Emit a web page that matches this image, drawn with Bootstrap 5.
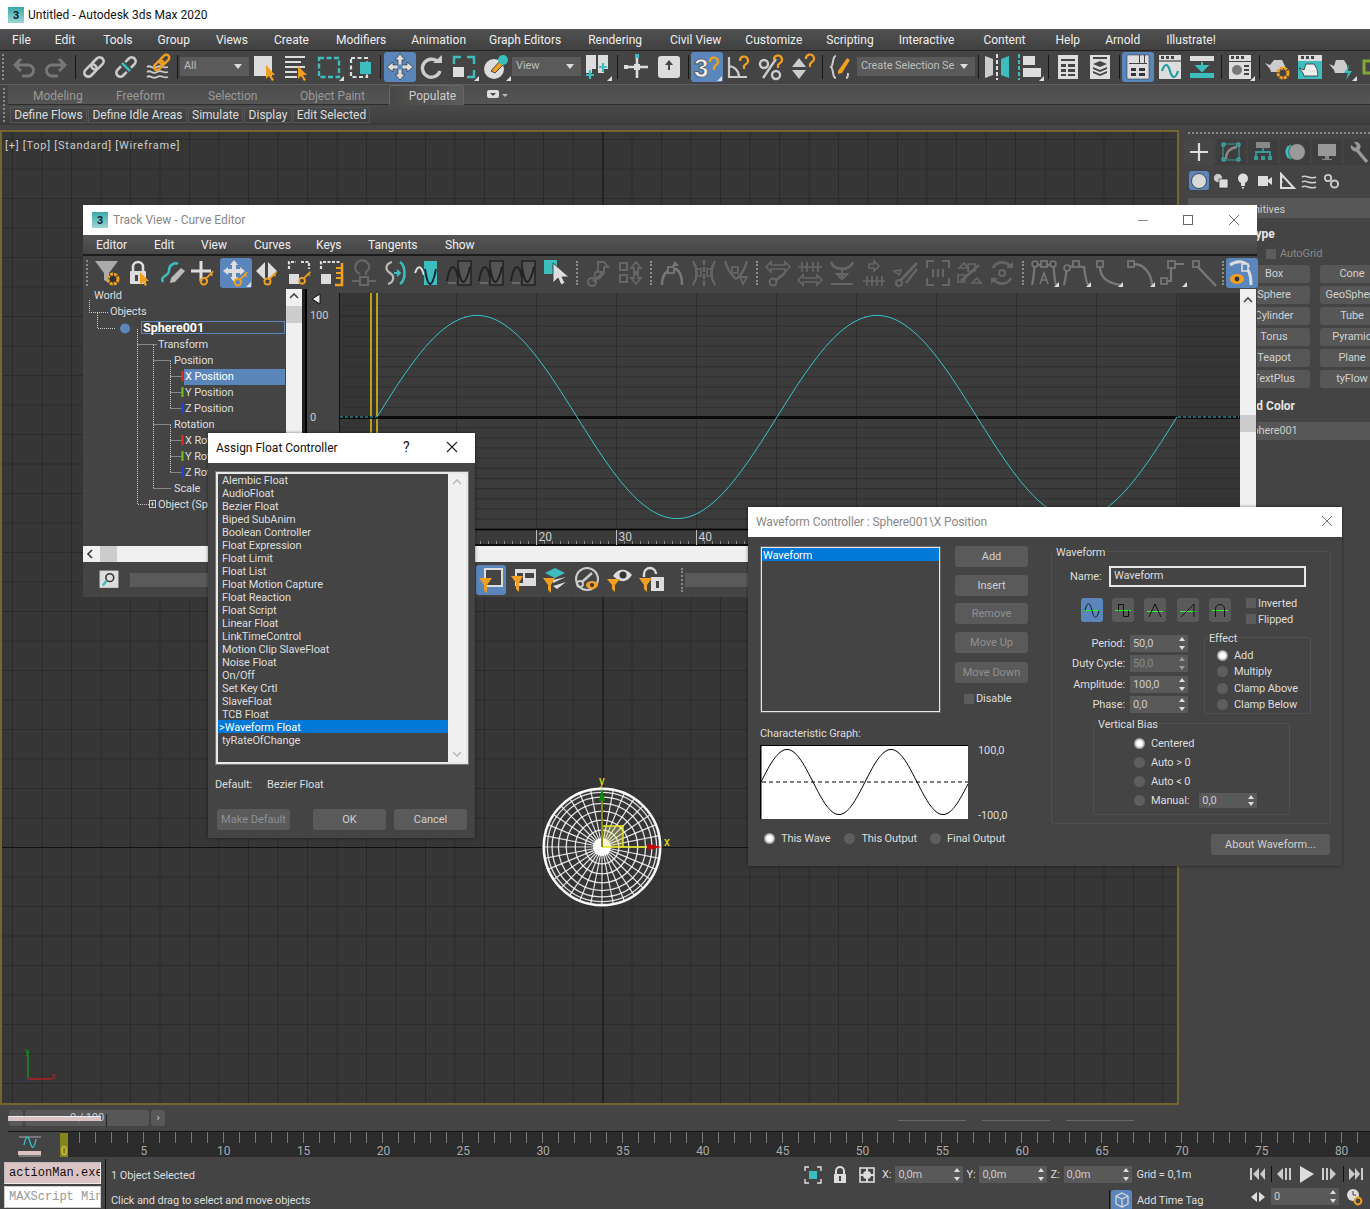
<!DOCTYPE html>
<html lang="en">
<head>
<meta charset="UTF-8">
<title>Untitled - Autodesk 3ds Max 2020</title>
<link href="https://cdn.jsdelivr.net/npm/bootstrap@5.3.0/dist/css/bootstrap.min.css" rel="stylesheet">
<style>
html, body { margin: 0; width: 1370px; height: 1209px; overflow: hidden; }
body { background: #444; color: #ddd; font: 11px/16px Roboto, "Liberation Sans", sans-serif; letter-spacing: -.1px; position: relative; }
svg { display: block; }
.win-title { height: 29px; background: #fff; color: #111; padding-left: 8px; font-size: 12px; letter-spacing: 0; }
.app-icon { width: 16px; height: 16px; margin-right: 4px; background: linear-gradient(#3aa9a9, #9fd4d4); color: #123; font: 700 11px/16px "Liberation Sans", sans-serif; text-align: center; flex: none; }
.menu-strip { height: 22px; background: linear-gradient(#505050, #404040); border-top: 1px solid #555; border-bottom: 1px solid #222; font-size: 12px; letter-spacing: 0; }
.menu-strip span { position: relative; white-space: nowrap; color: #eee; }
.main-tools { height: 34px; padding: 0 0 2px 2px; background: #444; border-bottom: 1px solid #5e5e5e; overflow: hidden; }
.tbtn { width: 32px; height: 30px; flex: none; display: flex; align-items: center; justify-content: center; position: relative; border-radius: 3px; }
.tbtn svg { width: 28px; height: 28px; }
.tbtn.on { background: #5b86bb; }
.tbtn.fly::after { content: ""; position: absolute; right: 1px; bottom: 1px; border-left: 5px solid transparent; border-bottom: 5px solid #ddd; }
.tsep { width: 6px; height: 24px; flex: none; display: flex; justify-content: center; }
.tsep::before { content: ""; width: 1px; background: #161616; }
.tsep.wide { width: 7px; }
.tsep.wider { width: 8px; }
.tsep.dot { width: 10px; }
.tsep.dot::before { width: 0; background: none; border-left: 2px dotted #8c8c8c; }
.grip { width: 2px; height: 26px; flex: none; border-left: 2px dotted #888; }
.tcombo { height: 19px; background: #5a5a5a; color: #bdbdbd; padding-left: 4px; flex: none; position: relative; line-height: 18px; white-space: nowrap; overflow: hidden; }
.tcombo::after { content: ""; position: absolute; right: 7px; top: 7px; border: 4px solid transparent; border-top: 5px solid #ddd; border-bottom: 0; }
.rib-wrap { position: relative; font-size: 12px; letter-spacing: 0; }
.rib-grip { position: absolute; left: 3px; top: 3px; height: 34px; border-left: 2px dotted #888; }
.rib-tabs { height: 20px; margin-left: 8px; background: linear-gradient(#4c4c4c, #555); border-bottom: 1px solid #2d2d2d; color: #999; }
.rib-tabs span { position: absolute; top: 3px; }
.rib-active { position: absolute; left: 381px; top: 0; width: 75px; height: 20px; padding-left: 12px; background: linear-gradient(to right, #484848, #5c5c5c); border: 1px solid #666; border-bottom: 0; border-radius: 3px 3px 0 0; color: #ccc; text-align: center; line-height: 20px; }
.rib-sub { height: 20px; padding: 2px 0 0 10px; background: linear-gradient(#4a4a4a, #3d3d3d); border-bottom: 1px solid #3a3a3a; }
.rib-sub span { border: 1px solid #555; height: 16px; line-height: 14px; text-align: center; color: #ddd; margin-right: 1px; white-space: nowrap; }
.work-row { margin-top: 5px; height: 975px; }
.viewport { width: 1179px; height: 975px; flex: none; position: relative; border: 2px solid #75652f; background-color: #363636;
  background-image: linear-gradient(to right, #2a2a2a 1px, transparent 1px), linear-gradient(to bottom, #2a2a2a 1px, transparent 1px);
  background-size: 29.5px 29.5px; background-position: 10px 7px; }
.vp-label { position: absolute; left: 3px; top: 6px; color: #ccc; font-size: 11px; letter-spacing: .75px; }
.axis-h { position: absolute; left: 0; top: 715px; width: 100%; height: 1px; background: #111; }
.axis-v { position: absolute; left: 600px; top: 0; width: 2px; height: 100%; background: #222; }
.cmd-panel { width: 186px; margin-left: 5px; height: 975px; position: relative; overflow: hidden; }
.cmd-dots { margin-top: 2px; border-top: 2px dotted #888; margin-left: 4px; }
.cmd-tabs { height: 26px; margin-top: 5px; gap: 2px; border-bottom: 1px solid #3a3a3a; }
.cmd-tabs div { width: 30px; height: 26px; display: flex; justify-content: center; align-items: center; flex: none; background: #3e3e3e; border-radius: 4px 4px 0 0; }
.cmd-tabs div.on { background: #474747; }
.cmd-tabs svg { width: 24px; height: 24px; }
.cmd-types { height: 19px; margin-top: 6px; padding-left: 4px; }
.cmd-types div { width: 22px; height: 19px; flex: none; display: flex; justify-content: center; align-items: center; border-radius: 3px; }
.cmd-types svg { width: 18px; height: 18px; }
.cmd-types .on { width: 20px; margin: 0 1px; background: #5b86bb; }
.roll-bar { height: 20px; margin: 8px 0 0 4px; background: #575757; line-height: 24px; color: #ccc; overflow: hidden; }
.roll-bar div { width: 97px; display: flex; justify-content: flex-end; white-space: nowrap; }
.roll-head { font-weight: 700; font-size: 12px; letter-spacing: 0; color: #e4e4e4; white-space: nowrap; }
.prim-grid { display: grid; grid-template-columns: 72px 64px; gap: 3px 10px; margin-left: 54px; width: 160px; }
.prim-grid span { height: 18px; background: #575757; border-radius: 3px; text-align: center; line-height: 18px; color: #d0d0d0; white-space: nowrap; }
.tv-win { position: absolute; left: 83px; top: 205px; width: 1174px; height: 392px; background: #444; }
.tv-title { height: 30px; background: #fff; color: #888; padding-left: 9px; position: relative; font-size: 12px; letter-spacing: 0; }
.tv-ctrl { position: absolute; top: 7px; width: 16px; height: 16px; }
.tv-menu { height: 21px; background: linear-gradient(#555, #454545); border-bottom: 2px solid #1c1c1c; color: #eee; position: relative; font-size: 12px; letter-spacing: 0; }
.tv-menu span { position: absolute; top: 2px; }
.tv-tools { height: 33px; padding-left: 3px; background: #444; }
.tv-tools .tbtn { height: 30px; }
.tv-mid { height: 257px; position: relative; }
.tv-tree { width: 203px; flex: none; position: relative; overflow: hidden; }
.tree-row { height: 16px; white-space: nowrap; color: #ddd; position: relative; }
.tree-row:first-of-type { margin-top: -1px; }
.tree-sel { display: block; background: #5b86bb; width: 101px; color: #fff; padding-left: 1px; margin-left: 101px; }
.tree-box { display: block; margin-left: 58px; width: 144px; height: 13px; margin-top: 1px; line-height: 12px; border: 1px solid #5b86bb; font-weight: 700; font-size: 12.5px; letter-spacing: 0; color: #fff; padding-left: 1px; }
.sbar-v { width: 16px; flex: none; background: #f0f0f0; position: relative; }
.sbar-thumb { position: absolute; left: 0; width: 16px; background: #cdcdcd; }
.sbar-arrow { display: flex; justify-content: center; padding-top: 4px; }
.tv-sep { width: 5px; flex: none; background: #222; border-right: 2px solid #000; }
.tv-labels { width: 32px; flex: none; position: relative; color: #ccc; }
.tv-labels span { position: absolute; left: 3px; }
.tv-graph { width: 901px; flex: none; }
.tv-hbar { height: 16px; background: #f0f0f0; position: relative; }
.tv-bottom { height: 35px; padding-left: 15px; background: #444; }
.gray-field { height: 14px; background: #5a5a5a; }
.dlg { position: absolute; background: #444; color: #ddd; box-shadow: 0 0 3px rgba(0,0,0,.5); }
.dlg-title { height: 30px; background: #fff; padding-left: 8px; position: relative; font-size: 12px; letter-spacing: 0; }
.dlg-btn { display: block; height: 21px; line-height: 21px; padding: 0; border: 0; background: #5a5a5a; border-radius: 3px; color: #d0d0d0; font-size: 11px; letter-spacing: 0; text-align: center; }
.dlg-btn.dim { color: #909090; }
.float-list { margin: 9px 7px 0 8px; height: 292px; border: 2px solid #e8e8e8; outline: 1px solid #777; position: relative; background: #444; overflow: hidden; }
.float-item { height: 13px; line-height: 15px; padding: 0 0 0 4px; color: #ddd; white-space: nowrap; border: 0; background: none; border-radius: 0; }
.float-item.sel { background: #0078d7; color: #fff; padding-left: 1px; }
.float-sb { position: absolute; right: 0; top: 0; bottom: 0; width: 18px; background: #f0f0f0; }
.wf-list { width: 181px; height: 167px; border: 2px solid #e8e8e8; outline: 1px solid #666; outline-offset: -1px; }
.wf-sel { height: 13px; line-height: 15px; background: #0078d7; color: #fff; padding-left: 1px; }
.chk { width: 10px; height: 10px; background: #5c5c5c; flex: none; }
.rb { width: 11px; height: 11px; border-radius: 50%; background: #5e5e5e; flex: none; }
.rb.on { background: radial-gradient(circle, #fff 0 35%, #aaa 60%, #666 100%); }
.rb + span { padding-top: 1px; }
.spn { width: 58px; height: 17px; background: #595959; color: #ccc; padding-left: 3px; line-height: 17px; position: relative; flex: none; }
.spn::before, .spn::after { content: ""; position: absolute; right: 3px; border: 3px solid transparent; }
.spn::before { top: 2px; border-bottom: 4px solid #ddd; border-top: 0; }
.spn::after { bottom: 2px; border-top: 4px solid #ddd; border-bottom: 0; }
.spn.off { color: #888; }
.spn.off::before { border-bottom-color: #999; }
.spn.off::after { border-top-color: #999; }
.grp { position: relative; border: 1px solid #505050; border-radius: 3px; }
.grp-legend { position: absolute; top: -7px; left: 3px; background: #444; padding: 0 1px; white-space: nowrap; }
.wf-name { width: 197px; height: 21px; border: 2px solid #e8e8e8; padding-left: 3px; line-height: 16px; margin-left: 3px; }
.shape-btn { width: 22px; height: 24px; background: #5a5a5a; border-radius: 3px; display: flex; align-items: center; justify-content: center; flex: none; }
.shape-btn.on { background: #5b86bb; }
.param-row { height: 20.5px; }
.param-row label { width: 73px; text-align: right; margin-right: 5px; padding-top: 1px; color: #ddd; }
.slider-row { height: 26px; padding: 5px 0 0 9px; position: relative; }
.sl-btn { height: 16px; background: #585858; border-radius: 3px; text-align: center; line-height: 16px; color: #ccc; font-size: 11px; }
.pink-bar { position: absolute; left: 8px; top: 11px; width: 93px; height: 5px; background: #dcc3c3; border-top: 1px solid #eee; }
.pink-end { position: absolute; left: 106px; top: 9px; width: 1px; height: 13px; background: #222; }
.ghost { height: 1px; background: #666; margin-top: 10px; flex: none; }
.timeline { height: 26px; position: relative; }
.status { height: 52px; position: relative; }
.mini-box { width: 97px; height: 22px; margin-left: 4px; font: 12px/20px "Liberation Mono", monospace; letter-spacing: 0; padding-left: 4px; overflow: hidden; white-space: nowrap; }
.mini-a { background: #dcc3c3; color: #111; border: 1px solid #bbb; border-right-color: #eee; border-bottom-color: #eee; margin-top: 5px; }
.mini-b { background: #fff; color: #999; border: 1px solid #ccc; margin-top: 2px; }
.st-sep { width: 1px; height: 50px; background: #111; margin: 2px 5px 0 4px; flex: none; }
.st-ico svg { width: 20px; height: 20px; }
</style>
</head>
<body>
<svg width="0" height="0" class="position-absolute">
  <defs>
    <symbol id="i-undo" viewBox="0 0 28 28"><path d="M11 6 5 12l6 6M5 12h13a5 5 0 0 1 0 11h-6" fill="none" stroke="#777" stroke-width="3"/></symbol>
    <symbol id="i-redo" viewBox="0 0 28 28"><path d="M17 6l6 6-6 6M23 12H10a5 5 0 0 0 0 11h6" fill="none" stroke="#777" stroke-width="3"/></symbol>
    <symbol id="i-link" viewBox="0 0 28 28"><g transform="rotate(-45 14 14)" fill="none" stroke="#ccc" stroke-width="2.6"><rect x="2" y="10" width="14" height="8" rx="4"/><rect x="12" y="10" width="14" height="8" rx="4"/></g></symbol>
    <symbol id="i-unlink" viewBox="0 0 28 28"><g transform="rotate(-45 14 14)" fill="none" stroke="#ccc" stroke-width="2.6"><path d="M11 10H6a4 4 0 0 0 0 8h5M17 10h5a4 4 0 0 1 0 8h-5"/></g><path d="M10 10l8 8" stroke="#3dbdbd" stroke-width="2.5"/></symbol>
    <symbol id="i-bind" viewBox="0 0 28 28"><path d="M3 14c4-3 5 3 10 0s6 2 11 0M3 19c4-3 5 3 10 0s6 2 11 0M3 24c4-3 5 3 10 0s6 2 11 0" fill="none" stroke="#ccc" stroke-width="1.8"/><g transform="rotate(-45 18 9)" fill="none" stroke="#f0a020" stroke-width="2.4"><rect x="8" y="6" width="11" height="6" rx="3"/><rect x="16" y="6" width="11" height="6" rx="3"/></g></symbol>
    <symbol id="i-selobj" viewBox="0 0 28 28"><rect x="3" y="3" width="18" height="20" fill="#ddd"/><path d="M15 12v14l3-3 3 5 2-1-3-5h4z" fill="#f0a020"/></symbol>
    <symbol id="i-selname" viewBox="0 0 28 28"><path d="M2 3h20v2H2zM2 8h16v2H2zM2 13h20v2H2zM2 18h12v2H2zM2 23h12v2H2z" fill="#ddd"/><path d="M15 13v13l3-3 3 5 2-1-3-5h4z" fill="#f0a020"/></symbol>
    <symbol id="i-rect" viewBox="0 0 28 28"><rect x="4" y="5" width="20" height="19" fill="none" stroke="#3dbdbd" stroke-width="2.4" stroke-dasharray="5 2.5"/></symbol>
    <symbol id="i-cross" viewBox="0 0 28 28"><rect x="4" y="5" width="16" height="19" fill="none" stroke="#ddd" stroke-width="2.2" stroke-dasharray="4 2.5"/><rect x="13" y="9" width="11" height="12" fill="#3dbdbd"/></symbol>
    <symbol id="i-move" viewBox="0 0 28 28"><path d="M14 1l5 6h-3v5h5V9l6 5-6 5v-3h-5v5h3l-5 6-5-6h3v-5H7v3l-6-5 6-5v3h5V7H9z" fill="#ddd" stroke="#333" stroke-width=".7"/><rect x="11.5" y="11.5" width="5" height="5" fill="#5b86bb"/></symbol>
    <symbol id="i-rot" viewBox="0 0 28 28"><path d="M20 9a9 9 0 1 0 2 9" fill="none" stroke="#ccc" stroke-width="3.4"/><path d="M15 10h9V2z" fill="#ccc"/></symbol>
    <symbol id="i-scale" viewBox="0 0 28 28"><path d="M4 11V4h7M17 4h7v7M24 17v7h-7" fill="none" stroke="#3dbdbd" stroke-width="2.4"/><rect x="3" y="14" width="11" height="10" fill="#ddd"/></symbol>
    <symbol id="i-place" viewBox="0 0 28 28"><circle cx="12" cy="16" r="10" fill="#ddd"/><path d="M9 18l9-10 4 3-9 9z" fill="#f0a020" stroke="#444"/><circle cx="21" cy="7" r="5" fill="#3dbdbd"/></symbol>
    <symbol id="i-pivot" viewBox="0 0 28 28"><path d="M3 2h10v14H9v4H3zM15 2h10v14h-4v4h-6z" fill="#ddd"/><path d="M7 17v9M3 22h8M20 10v9M16 14h8" stroke="#3dbdbd" stroke-width="2.2"/></symbol>
    <symbol id="i-manip" viewBox="0 0 28 28"><path d="M14 3v22M3 14h22" stroke="#ddd" stroke-width="2.6"/><rect x="11" y="11" width="6" height="6" fill="#ddd"/><rect x="12" y="1" width="4" height="4" fill="#3dbdbd"/><rect x="1" y="12" width="4" height="4" fill="#ddd"/></symbol>
    <symbol id="i-kbd" viewBox="0 0 28 28"><rect x="3" y="3" width="22" height="22" rx="3" fill="#ddd"/><path d="M14 7l-4 5h3v5h2v-5h3z" fill="#444"/></symbol>
    <symbol id="i-snap3" viewBox="0 0 28 28"><text x="1" y="24" font-family="Liberation Sans" font-weight="700" font-size="26" fill="#eee" stroke="#333" stroke-width=".6">3</text><path d="M17 9a4 4 0 1 1 6 3l-2 2v3" fill="none" stroke="#f0a020" stroke-width="2.2"/></symbol>
    <symbol id="i-ang" viewBox="0 0 28 28"><path d="M4 4v20h18M4 13a11 11 0 0 1 10 11" fill="none" stroke="#ccc" stroke-width="2.2"/><path d="M15 8a4 4 0 1 1 6 3l-2 2v3" fill="none" stroke="#f0a020" stroke-width="2.2"/></symbol>
    <symbol id="i-pct" viewBox="0 0 28 28"><circle cx="7" cy="11" r="4" fill="none" stroke="#ccc" stroke-width="2.4"/><circle cx="19" cy="22" r="4" fill="none" stroke="#ccc" stroke-width="2.4"/><path d="M6 25L19 6" stroke="#ccc" stroke-width="2.4"/><path d="M17 7a4 4 0 1 1 6 3l-2 2v3" fill="none" stroke="#f0a020" stroke-width="2.2"/></symbol>
    <symbol id="i-spin" viewBox="0 0 28 28"><path d="M10 5l7 9H3zM10 26l7-9H3z" fill="#ccc"/><path d="M17 6a4 4 0 1 1 6 3l-2 2v3" fill="none" stroke="#f0a020" stroke-width="2.2"/></symbol>
    <symbol id="i-named" viewBox="0 0 28 28"><path d="M9 3c-4 0-2 9-5 11 3 2 1 11 5 11M19 25c2 0 2-3 2-5" fill="none" stroke="#ccc" stroke-width="2"/><path d="M11 18L20 5l3 2-8 13-4 1z" fill="#f0a020"/></symbol>
    <symbol id="i-mirror" viewBox="0 0 28 28"><path d="M2 3l8 3v16l-8 3z" fill="#ccc"/><path d="M26 3l-8 3v16l8 3z" fill="#3dbdbd"/><path d="M14 1v26" stroke="#ddd" stroke-width="2" stroke-dasharray="4 2"/></symbol>
    <symbol id="i-align" viewBox="0 0 28 28"><path d="M4 1v26" stroke="#3dbdbd" stroke-width="2" stroke-dasharray="4 2"/><rect x="8" y="3" width="12" height="9" fill="#ddd"/><rect x="8" y="15" width="18" height="9" fill="#ddd"/></symbol>
    <symbol id="i-layer" viewBox="0 0 28 28"><rect x="4" y="2" width="20" height="24" fill="#ddd"/><path d="M7 6h14v2H7zM7 11h5v3H7zM14 11h7v3h-7zM7 16h5v3H7zM14 16h7v3h-7zM7 21h5v2H7zM14 21h7v2h-7z" fill="#444"/></symbol>
    <symbol id="i-stack" viewBox="0 0 28 28"><rect x="4" y="2" width="20" height="24" fill="#ddd"/><path d="M7 4h14v2H7zM14 8l7 3-7 3-7-3zM7 14l7 3 7-3v2l-7 3-7-3zM7 18l7 3 7-3v2l-7 3-7-3z" fill="#444"/></symbol>
    <symbol id="i-schem" viewBox="0 0 28 28"><rect x="3" y="2" width="22" height="24" rx="1" fill="#ddd" stroke="#223" stroke-width=".5"/><path d="M15 2h1v8h-1zM20 2h1v8h-1zM5 10h18v1H5z" fill="#444"/><path d="M7 15h5v3H7zM15 15h6v3h-6zM7 20h5v3H7zM15 20h6v3h-6z" fill="#334"/></symbol>
    <symbol id="i-wave" viewBox="0 0 28 28"><rect x="3" y="2" width="22" height="24" fill="#ddd"/><path d="M3 8h22" stroke="#444" stroke-width="1.2"/><path d="M5 3h3v3H5zM10 3h3v3h-3zM15 3h3v3h-3z" fill="#444"/><path d="M6 18c3-9 6-7 8 0s5 9 8 0" fill="none" stroke="#1c9c9c" stroke-width="2.2"/></symbol>
    <symbol id="i-dope" viewBox="0 0 28 28"><path d="M2 3h24v5H2z" fill="#ddd"/><path d="M2 20h24v5H2z" fill="#3dbdbd"/><path d="M14 9v7M9 13l5 5 5-5z" fill="#3dbdbd" stroke="#3dbdbd" stroke-width="2"/></symbol>
    <symbol id="i-render" viewBox="0 0 28 28"><rect x="3" y="2" width="22" height="24" fill="#ddd"/><path d="M5 3h3v3H5zM10 3h3v3h-3zM15 3h3v3h-3zM3 8h22v1H3z" fill="#444"/><circle cx="11" cy="17" r="5" fill="#777"/><path d="M18 12h5v2h-5zM18 16h5v2h-5zM18 20h5v2h-5z" fill="#444"/></symbol>
    <symbol id="i-potgear" viewBox="0 0 28 28"><path d="M10 7h8l3 6 1 6H7l-1-3-5-6 5 2z" fill="#ccc"/><circle cx="19" cy="20" r="5" fill="#444" stroke="#f0a020" stroke-width="3" stroke-dasharray="3 1"/></symbol>
    <symbol id="i-potwin" viewBox="0 0 28 28"><rect x="2" y="2" width="24" height="24" fill="#3dbdbd"/><path d="M2 2h24v6H2z" fill="#ddd"/><path d="M5 3h3v3H5zM10 3h3v3h-3zM15 3h3v3h-3z" fill="#444"/><path d="M10 11h8l3 5 1 7H8l-1-3-4-5 5 2z" fill="#eee" stroke="#333" stroke-width=".8"/></symbol>
    <symbol id="i-potbolt" viewBox="0 0 28 28"><path d="M8 7h8l3 5 1 8H7l-1-3-5-6 5 2z" fill="#ccc"/><path d="M21 12l-5 8h4l-2 7 6-9h-4z" fill="#3dbdbd"/></symbol>
    <symbol id="i-green" viewBox="0 0 28 28"><path d="M4 8h8v12H4z" fill="none" stroke="#84a838" stroke-width="3"/></symbol>
    <!-- track view -->
    <symbol id="k-key" viewBox="0 0 28 28"><path d="M24 6L13 17" stroke="#f0a020" stroke-width="2.6"/><circle cx="11" cy="20" r="4.5" fill="none" stroke="#f0a020" stroke-width="2.8"/><path d="M20 9l3 3" stroke="#f0a020" stroke-width="2.4"/></symbol>
    <symbol id="t-filter" viewBox="0 0 28 28"><path d="M1 2h23l-9 12v10l-5-3v-7z" fill="#aaa"/><circle cx="19" cy="20" r="5" fill="#333" stroke="#f0a020" stroke-width="3" stroke-dasharray="3 1"/></symbol>
    <symbol id="t-lock" viewBox="0 0 28 28"><path d="M7 12V8a5 5 0 0 1 10 0v4" fill="none" stroke="#ddd" stroke-width="2.6"/><rect x="4" y="12" width="16" height="13" rx="1" fill="#ddd"/><rect x="9" y="16" width="3" height="6" fill="#444"/><path d="M14 13v13l3-3 2 4 2-1-2-4h4z" fill="#f0a020"/></symbol>
    <symbol id="t-pencil" viewBox="0 0 28 28"><path d="M5 23c-4-6 7-6 6-12 0-5 6-8 9-6" fill="none" stroke="#3dbdbd" stroke-width="2.5"/><path d="M12 24l1-5 10-10 4 3-10 11z" fill="#bbb"/></symbol>
    <symbol id="t-add" viewBox="0 0 28 28"><path d="M11 2v20M1 12h20" stroke="#ddd" stroke-width="3"/><use href="#k-key" x="6" y="8" width="20" height="20"/></symbol>
    <symbol id="t-move" viewBox="0 0 28 28"><path d="M12 1l4 5h-2v4h4V8l5 4-5 4v-2h-4v4h2l-4 5-4-5h2v-4H6v2l-5-4 5-4v2h4V6H8z" fill="#ddd"/><use href="#k-key" x="8" y="9" width="20" height="20"/></symbol>
    <symbol id="t-slide" viewBox="0 0 28 28"><path d="M11 3v18L2 12zM14 3v18l9-9z" fill="#ddd"/><use href="#k-key" x="6" y="9" width="19" height="19"/></symbol>
    <symbol id="t-scale" viewBox="0 0 28 28"><path d="M3 10V3h7M15 3h8v7" fill="none" stroke="#ddd" stroke-width="2.2" stroke-dasharray="3 1.5"/><rect x="3" y="15" width="10" height="10" fill="#ddd"/><use href="#k-key" x="9" y="9" width="18" height="18"/></symbol>
    <symbol id="t-scalev" viewBox="0 0 28 28"><path d="M3 10V3h19" fill="none" stroke="#ddd" stroke-width="2.2" stroke-dasharray="3 1.5"/><rect x="3" y="15" width="10" height="10" fill="#ddd"/><path d="M24 4v22h-7" fill="none" stroke="#f0a020" stroke-width="2.6"/><path d="M18 9h6M18 14h6M18 19h6" stroke="#f0a020" stroke-width="2"/></symbol>
    <symbol id="t-magnet" viewBox="0 0 28 28"><path d="M10 15a7 7 0 1 1 9-5l-3 3v3" fill="none" stroke="#666" stroke-width="2.2"/><path d="M2 22h24" stroke="#666" stroke-width="2"/><rect x="10" y="18" width="8" height="8" fill="#444" stroke="#666" stroke-width="2"/></symbol>
    <symbol id="t-snapf" viewBox="0 0 28 28"><path d="M10 3C3 5 3 11 8 14s4 9-2 11" fill="none" stroke="#bbb" stroke-width="2.2"/><path d="M18 3c6 4 6 18 0 22" fill="none" stroke="#3dbdbd" stroke-width="2.6"/><path d="M12 14h5M15 11l3 3-3 3" fill="none" stroke="#3dbdbd" stroke-width="1.8"/></symbol>
    <symbol id="t-curvek" viewBox="0 0 28 28"><path d="M1 14c3-8 6-8 9 2" fill="none" stroke="#ddd" stroke-width="2"/><rect x="10" y="2" width="13" height="24" fill="#3dbdbd"/><path d="M11 10c3 20 7 20 11 0" fill="none" stroke="#123" stroke-width="2"/></symbol>
    <symbol id="t-dim1" viewBox="0 0 28 28"><rect x="12" y="2" width="13" height="24" fill="#555" stroke="#222" stroke-width="1.5"/><path d="M1 22c3-18 8-18 11-4M12 8c3 20 7 20 12 0" fill="none" stroke="#222" stroke-width="2"/><path d="M2 24h8" stroke="#666" stroke-width="2.2"/></symbol>
    <symbol id="t-cursor" viewBox="0 0 28 28"><rect x="2" y="1" width="13" height="14" fill="#3dbdbd"/><path d="M11 4v20l5-5 3 7 4-2-3-6h7z" fill="#ddd" stroke="#444"/></symbol>
    <symbol id="t-dimkey" viewBox="0 0 28 28"><path d="M14 3h6l4 5h-4v5h-6z" fill="none" stroke="#666" stroke-width="2"/><path d="M20 14L9 22" stroke="#666" stroke-width="2.8"/><circle cx="8" cy="23" r="4" fill="none" stroke="#666" stroke-width="2.2"/><circle cx="14" cy="16" r="3.5" fill="none" stroke="#666" stroke-width="2"/></symbol>
    <symbol id="t-dimud" viewBox="0 0 28 28"><path d="M4 4h7v7H4zM4 16h7v7H4z" fill="none" stroke="#666" stroke-width="2"/><path d="M20 3l5 6h-3v4h-4V9h-3zM20 25l5-6h-3v-4h-4v4h-3z" fill="none" stroke="#666" stroke-width="1.8"/></symbol>
    <symbol id="t-dimarc" viewBox="0 0 28 28"><path d="M4 26c0-12 6-16 14-16 4 2 6 8 6 16" fill="none" stroke="#777" stroke-width="2.6"/><rect x="10" y="8" width="6" height="6" fill="#444" stroke="#777" stroke-width="1.8"/><path d="M14 7l3-5 4 5z" fill="#777"/></symbol>
    <symbol id="t-dimmir" viewBox="0 0 28 28"><path d="M3 2c5 8 5 16 0 24M25 2c-5 8-5 16 0 24" fill="none" stroke="#666" stroke-width="2.2"/><path d="M14 1v26" stroke="#666" stroke-width="2.4" stroke-dasharray="5 2"/><rect x="6" y="10" width="5" height="7" fill="none" stroke="#666" stroke-width="1.6"/><rect x="17" y="10" width="5" height="7" fill="none" stroke="#666" stroke-width="1.6"/></symbol>
    <symbol id="t-dimv" viewBox="0 0 28 28"><path d="M3 2c3 10 6 14 11 18M25 2c-2 8-5 14-11 18" fill="none" stroke="#666" stroke-width="2.4"/><rect x="10" y="8" width="6" height="6" fill="none" stroke="#666" stroke-width="1.8"/><path d="M18 18h7l-4 7z" fill="none" stroke="#666" stroke-width="1.8"/></symbol>
    <symbol id="t-dimh" viewBox="0 0 28 28"><path d="M2 8l5-5v3h14V3l5 5-5 5v-3H7v3z" fill="none" stroke="#666" stroke-width="1.7"/><path d="M21 14L11 22" stroke="#666" stroke-width="2.8"/><circle cx="9" cy="23" r="3.5" fill="none" stroke="#666" stroke-width="2"/></symbol>
    <symbol id="t-dimbars" viewBox="0 0 28 28"><path d="M2 8h24M6 3v10M11 3v10M17 3v10M22 3v10" stroke="#666" stroke-width="1.7" fill="none"/><path d="M2 21l5-5v3h14v-3l5 5-5 5v-3H7v3z" fill="none" stroke="#666" stroke-width="1.7"/></symbol>
    <symbol id="t-dimdown" viewBox="0 0 28 28"><path d="M3 3c3 9 19 9 22 0" fill="none" stroke="#666" stroke-width="2.6"/><path d="M14 11v7M9 15l5 5 5-5zM3 25h22" fill="none" stroke="#666" stroke-width="2.2"/></symbol>
    <symbol id="t-dimcut" viewBox="0 0 28 28"><path d="M14 2l5 5-5 5V9H9V5h5z" fill="none" stroke="#666" stroke-width="1.7"/><path d="M3 22h22M7 17v10M12 17v10M17 17v10M22 17v10" stroke="#666" stroke-width="1.7"/></symbol>
    <symbol id="t-dimch" viewBox="0 0 28 28"><path d="M25 4L8 22" stroke="#666" stroke-width="2.8"/><path d="M25 10L14 24" stroke="#666" stroke-width="2.4"/><circle cx="7" cy="24" r="3" fill="none" stroke="#666" stroke-width="2"/><path d="M2 12l5 4 2-5z" fill="none" stroke="#666" stroke-width="1.6"/></symbol>
    <symbol id="t-dimbr" viewBox="0 0 28 28"><path d="M3 9V2h7M25 9V2h-7M3 19v7h7M25 19v7h-7M9 10v8M14 10v8M19 10v8" fill="none" stroke="#666" stroke-width="2"/></symbol>
    <symbol id="t-dimst" viewBox="0 0 28 28"><path d="M5 22L23 6" stroke="#666" stroke-width="2.4"/><path d="M3 9l5-5 4 5zM16 24l5-5 4 5z" fill="none" stroke="#666" stroke-width="1.7"/><path d="M2 16h7v7H2zM12 5h7v7h-7z" fill="none" stroke="#666" stroke-width="1.6"/></symbol>
    <symbol id="t-dimcy" viewBox="0 0 28 28"><path d="M5 9a10 10 0 0 1 18 0M23 19a10 10 0 0 1-18 0" fill="none" stroke="#666" stroke-width="2.6"/><path d="M18 9h7V3zM10 19H3v6z" fill="#666"/><circle cx="14" cy="14" r="3" fill="none" stroke="#666" stroke-width="2"/></symbol>
    <symbol id="t-dima" viewBox="0 0 28 28"><path d="M5 2c-1 10-1 16-3 24M23 2c1 10 1 16 3 24" fill="none" stroke="#777" stroke-width="2.2"/><path d="M5 6h18" stroke="#777" stroke-width="2"/><circle cx="5" cy="5" r="3" fill="#444" stroke="#777" stroke-width="1.7"/><circle cx="23" cy="5" r="3" fill="#444" stroke="#777" stroke-width="1.7"/><rect x="11" y="2" width="6" height="6" fill="#444" stroke="#777" stroke-width="1.7"/><path d="M10 25l4-11 4 11M11.5 21h5" fill="none" stroke="#777" stroke-width="1.5"/></symbol>
    <symbol id="t-dimp" viewBox="0 0 28 28"><path d="M5 7c-1 8-1 12-3 19M22 7c1 8 1 12 4 19" fill="none" stroke="#777" stroke-width="2.2"/><path d="M5 9l9-3 9 3" fill="none" stroke="#777" stroke-width="2"/><circle cx="5" cy="9" r="3" fill="#444" stroke="#777" stroke-width="1.7"/><rect x="11" y="2" width="6" height="6" fill="#444" stroke="#777" stroke-width="1.7"/></symbol>
    <symbol id="t-dimc1" viewBox="0 0 28 28"><rect x="3" y="2" width="6" height="6" fill="none" stroke="#777" stroke-width="1.7"/><path d="M6 8c0 10 8 16 20 18" fill="none" stroke="#777" stroke-width="2.4"/></symbol>
    <symbol id="t-dimc2" viewBox="0 0 28 28"><rect x="2" y="2" width="6" height="6" fill="none" stroke="#777" stroke-width="1.7"/><path d="M8 5c10 0 18 10 18 22" fill="none" stroke="#777" stroke-width="2.4"/></symbol>
    <symbol id="t-dimc3" viewBox="0 0 28 28"><rect x="10" y="2" width="7" height="7" fill="none" stroke="#777" stroke-width="1.7"/><rect x="3" y="19" width="6" height="6" fill="none" stroke="#777" stroke-width="1.7"/><path d="M17 5h9M13 9v13H9" fill="none" stroke="#777" stroke-width="2.2"/></symbol>
    <symbol id="t-dimc4" viewBox="0 0 28 28"><rect x="3" y="2" width="6" height="6" fill="none" stroke="#777" stroke-width="1.7"/><path d="M8 8l18 19" stroke="#777" stroke-width="2.4"/></symbol>
    <symbol id="t-eye" viewBox="0 0 28 28"><path d="M2 6c8-6 16-3 19 2" fill="none" stroke="#ddd" stroke-width="3"/><rect x="14" y="5" width="6" height="7" fill="#5b86bb" stroke="#ddd" stroke-width="1.6"/><path d="M20 11c3 5 3 9 3 15" fill="none" stroke="#ddd" stroke-width="3"/><ellipse cx="9" cy="20" rx="7" ry="5" fill="#f0a020"/><circle cx="9" cy="20" r="2.4" fill="#333"/></symbol>
    <symbol id="t-zoomtree" viewBox="0 0 28 28"><rect x="2" y="2" width="24" height="22" fill="#ddd"/><circle cx="15" cy="11" r="5" fill="none" stroke="#333" stroke-width="2"/><path d="M11 15l-5 6" stroke="#3dbdbd" stroke-width="3"/></symbol>
    <symbol id="f-win" viewBox="0 0 28 28"><rect x="8" y="3" width="17" height="17" fill="#444" stroke="#ddd" stroke-width="2"/><path d="M2 12h13l-5 7v8l-3-3v-5z" fill="#f0a020"/></symbol>
    <symbol id="f-film" viewBox="0 0 28 28"><rect x="6" y="3" width="21" height="17" fill="#ddd"/><path d="M8 7h6v10H8zM16 7h9v5h-9z" fill="#444"/><path d="M2 10h12l-4 7v9l-3-3v-6z" fill="#f0a020"/></symbol>
    <symbol id="f-layer" viewBox="0 0 28 28"><path d="M14 2l10 5-10 5-10-5z" fill="#3dbdbd"/><path d="M12 14l13-3-13 6zM12 20l13-4-9 7z" fill="#ddd"/><path d="M2 12h12l-4 7v8l-3-3v-5z" fill="#f0a020"/></symbol>
    <symbol id="f-key" viewBox="0 0 28 28"><circle cx="14" cy="13" r="11" fill="none" stroke="#ccc" stroke-width="2"/><path d="M19 7L9 16" stroke="#ccc" stroke-width="2.4"/><circle cx="7" cy="18" r="3" fill="none" stroke="#ccc" stroke-width="1.8"/><ellipse cx="19" cy="19" rx="6" ry="4" fill="#f0a020"/><circle cx="19" cy="19" r="2" fill="#333"/></symbol>
    <symbol id="f-eye" viewBox="0 0 28 28"><path d="M8 10c6-9 14-7 19-1-6 9-13 7-19 1z" fill="#ddd"/><circle cx="18" cy="9" r="3.5" fill="#333"/><path d="M2 13h13l-5 6v7l-3-3v-4z" fill="#f0a020"/></symbol>
    <symbol id="f-lock" viewBox="0 0 28 28"><path d="M7 11V8a6 6 0 0 1 12 0" fill="none" stroke="#ddd" stroke-width="2.4"/><rect x="14" y="11" width="13" height="14" fill="#ddd"/><rect x="19" y="15" width="3" height="7" fill="#444"/><path d="M2 12h13l-5 7v7l-3-3v-4z" fill="#f0a020"/></symbol>
  </defs>
</svg>

<!-- title bar -->
<div class="win-title d-flex align-items-center">
  <div class="app-icon">3</div><span>Untitled - Autodesk 3ds Max 2020</span>
</div>

<!-- main menu -->
<div class="menu-strip d-flex align-items-center">
  <span style="margin-left:12px">File</span><span style="margin-left:24px">Edit</span><span style="margin-left:28px">Tools</span><span style="margin-left:25px">Group</span><span style="margin-left:26px">Views</span><span style="margin-left:26px">Create</span><span style="margin-left:27px">Modifiers</span><span style="margin-left:25px">Animation</span><span style="margin-left:23px">Graph Editors</span><span style="margin-left:27px">Rendering</span><span style="margin-left:28px">Civil View</span><span style="margin-left:24px">Customize</span><span style="margin-left:24px">Scripting</span><span style="margin-left:25px">Interactive</span><span style="margin-left:29px">Content</span><span style="margin-left:30px">Help</span><span style="margin-left:25px">Arnold</span><span style="margin-left:26px">Illustrate!</span>
</div>

<!-- main toolbar -->
<div class="main-tools d-flex align-items-center">
  <div class="grip" style="margin-right:4px"></div>
  <div class="tbtn"><svg><use href="#i-undo"/></svg></div><div class="tbtn"><svg><use href="#i-redo"/></svg></div><div class="tsep"></div>
  <div class="tbtn"><svg><use href="#i-link"/></svg></div><div class="tbtn"><svg><use href="#i-unlink"/></svg></div><div class="tbtn"><svg><use href="#i-bind"/></svg></div><div class="tsep"></div>
  <div class="tcombo" style="width:69px">All</div>
  <div class="tbtn"><svg><use href="#i-selobj"/></svg></div><div class="tbtn"><svg><use href="#i-selname"/></svg></div><div class="tbtn fly"><svg><use href="#i-rect"/></svg></div><div class="tbtn"><svg><use href="#i-cross"/></svg></div><div class="tsep wide"></div>
  <div class="tbtn on"><svg><use href="#i-move"/></svg></div><div class="tbtn"><svg><use href="#i-rot"/></svg></div><div class="tbtn fly"><svg><use href="#i-scale"/></svg></div><div class="tbtn fly"><svg><use href="#i-place"/></svg></div>
  <div class="tcombo" style="width:69px">View</div>
  <div class="tbtn fly"><svg><use href="#i-pivot"/></svg></div><div class="tsep wider"></div>
  <div class="tbtn"><svg><use href="#i-manip"/></svg></div><div class="tbtn"><svg><use href="#i-kbd"/></svg></div><div class="tsep"></div>
  <div class="tbtn on fly"><svg><use href="#i-snap3"/></svg></div><div class="tbtn"><svg><use href="#i-ang"/></svg></div><div class="tbtn"><svg><use href="#i-pct"/></svg></div><div class="tbtn"><svg><use href="#i-spin"/></svg></div><div class="tsep"></div>
  <div class="tbtn"><svg><use href="#i-named"/></svg></div>
  <div class="tcombo" style="width:118px">Create Selection Se</div><div class="tsep"></div>
  <div class="tbtn"><svg><use href="#i-mirror"/></svg></div><div class="tbtn fly"><svg><use href="#i-align"/></svg></div><div class="tsep wide"></div>
  <div class="tbtn"><svg><use href="#i-layer"/></svg></div><div class="tbtn"><svg><use href="#i-stack"/></svg></div><div class="tsep"></div>
  <div class="tbtn on"><svg><use href="#i-schem"/></svg></div><div class="tbtn"><svg><use href="#i-wave"/></svg></div><div class="tbtn"><svg><use href="#i-dope"/></svg></div><div class="tsep"></div>
  <div class="tbtn fly"><svg><use href="#i-render"/></svg></div><div class="tsep"></div>
  <div class="tbtn"><svg><use href="#i-potgear"/></svg></div><div class="tbtn"><svg><use href="#i-potwin"/></svg></div><div class="tbtn fly"><svg><use href="#i-potbolt"/></svg></div><div class="tbtn"><svg><use href="#i-green"/></svg></div>
</div>

<!-- ribbon -->
<div class="rib-wrap">
  <div class="rib-grip"></div>
  <div class="rib-tabs position-relative">
    <span style="left:25px">Modeling</span><span style="left:108px">Freeform</span><span style="left:200px">Selection</span><span style="left:292px">Object Paint</span>
    <div class="rib-active">Populate</div>
    <svg width="22" height="14" class="position-absolute" style="left:479px;top:3px"><rect x="0" y="2" width="12" height="8" rx="2" fill="#ddd"/><path d="M3 5l3 3 3-3z" fill="#444"/><path d="M15 6h6l-3 3z" fill="#bbb"/></svg>
  </div>
  <div class="rib-sub d-flex">
    <span style="width:77px">Define Flows</span><span style="width:99px">Define Idle Areas</span><span style="width:55px">Simulate</span><span style="width:48px">Display</span><span style="width:77px">Edit Selected</span>
  </div>
</div>

<!-- viewport + command panel -->
<div class="work-row d-flex">
  <div class="viewport">
    <div class="axis-h"></div><div class="axis-v"></div>
    <div class="vp-label">[+] [Top] [Standard] [Wireframe]</div>
    <svg id="sphere" class="position-absolute" style="left:526px;top:640px" width="150" height="150" viewBox="0 0 150 150"></svg>
    <svg class="position-absolute" style="left:18px;top:913px" width="40" height="40"><path d="M8 6v28" stroke="#1a8a1a" stroke-width="1.5"/><path d="M8 34h24" stroke="#b02020" stroke-width="1.5"/><path d="M8 34l-3 2" stroke="#2030b0" stroke-width="1.5"/><text x="5" y="9" font-size="9" fill="#1a8a1a">y</text><text x="31" y="34" font-size="9" fill="#b02020">x</text></svg>
  </div>
  <div class="cmd-panel">
    <div class="cmd-dots"></div>
    <div class="cmd-tabs d-flex">
      <div class="on"><svg viewBox="0 0 24 24"><path d="M12 3v18M3 12h18" stroke="#ddd" stroke-width="2.2"/></svg></div>
      <div><svg viewBox="0 0 24 24"><path d="M4 4h16v16H4z" fill="none" stroke="#3a9a9a" stroke-width="1.2"/><path d="M3 3h3v3H3zM18 3h3v3h-3zM3 18h3v3H3zM18 18h3v3h-3z" fill="none" stroke="#3dbdbd"/><path d="M7 19c0-8 4-11 11-12" fill="none" stroke="#888" stroke-width="2.4"/></svg></div>
      <div><svg viewBox="0 0 24 24"><path d="M5 2h14v6H5z" fill="#888"/><path d="M12 8v4M5 16v-4h14v4" fill="none" stroke="#3a9a9a" stroke-width="1.8"/><path d="M3 16h4v4H3zM10 16h4v4h-4zM17 16h4v4h-4z" fill="#3a9a9a"/></svg></div>
      <div><svg viewBox="0 0 24 24"><circle cx="14" cy="12" r="8" fill="#999"/><path d="M8 5a9 9 0 0 0 0 14M5.5 6a9 9 0 0 0 0 12" fill="none" stroke="#3dbdbd" stroke-width="1.5"/></svg></div>
      <div><svg viewBox="0 0 24 24"><rect x="3" y="4" width="18" height="12" fill="#999"/><path d="M10 16h4v3h-4zM7 19h10v1H7z" fill="#888"/></svg></div>
      <div><svg viewBox="0 0 24 24"><path d="M20 22L10 10" stroke="#999" stroke-width="3.4"/><path d="M11 11a5 5 0 0 1-7-6l4 3 2-2-3-4a5 5 0 0 1 6 7z" fill="#999"/></svg></div>
    </div>
    <div class="cmd-types d-flex">
      <div class="on"><svg viewBox="0 0 18 18"><circle cx="9" cy="9" r="7.5" fill="#d8d8d8" stroke="#333" stroke-width=".8"/></svg></div>
      <div><svg viewBox="0 0 18 18"><circle cx="6" cy="6" r="4.5" fill="#ccc" stroke="#333" stroke-width=".7"/><rect x="7" y="7" width="9" height="9" fill="#ddd" stroke="#333" stroke-width=".7"/></svg></div>
      <div><svg viewBox="0 0 18 18"><circle cx="9" cy="6.5" r="5" fill="#ddd"/><path d="M7 11h4v3H7zM8 15h2v1.5H8z" fill="#ddd"/></svg></div>
      <div><svg viewBox="0 0 18 18"><path d="M2 4h10v10H2zM12 8l4-3v8l-4-3z" fill="#ddd"/></svg></div>
      <div><svg viewBox="0 0 18 18"><path d="M3 2l13 14H3z" fill="none" stroke="#ddd" stroke-width="2"/><path d="M3 6h2M3 10h2" stroke="#ddd"/></svg></div>
      <div><svg viewBox="0 0 18 18"><path d="M2 5c4-3 8 3 14 0M2 10c4-3 8 3 14 0M2 15c4-3 8 3 14 0" fill="none" stroke="#ccc" stroke-width="1.6"/></svg></div>
      <div><svg viewBox="0 0 18 18"><circle cx="6" cy="6" r="3.2" fill="none" stroke="#ccc" stroke-width="1.8" /><circle cx="12.5" cy="12" r="3.6" fill="none" stroke="#ccc" stroke-width="2"/></svg></div>
    </div>
    <div class="roll-bar"><div>Standard Primitives</div></div>
    <div class="roll-head" style="margin:8px 0 0 27px">Object Type</div>
    <div class="d-flex align-items-center" style="margin:4px 0 3px 82px;color:#888"><div class="chk" style="margin-right:4px"></div>AutoGrid</div>
    <div class="prim-grid">
      <span>Box</span><span>Cone</span><span>Sphere</span><span>GeoSphere</span><span>Cylinder</span><span>Tube</span><span>Torus</span><span>Pyramid</span><span>Teapot</span><span>Plane</span><span>TextPlus</span><span>tyFlow</span>
    </div>
    <div class="roll-head" style="margin:2px 0 0 0;padding:8px 0 0 0;text-align:right;width:111px">Name and Color</div>
    <div style="height:18px;background:#575757;margin:8px 0 0 4px;padding-left:58px;line-height:18px;color:#ccc">Sphere001</div>
  </div>
</div>

<!-- time slider -->
<div class="slider-row d-flex">
  <div class="sl-btn" style="width:14px;margin-right:2px">&lsaquo;</div>
  <div class="sl-btn" style="width:124px;margin-right:2px">0 / 100</div>
  <div class="sl-btn" style="width:14px">&rsaquo;</div>
  <div class="pink-bar"></div><div class="pink-end"></div>
  <div class="ghost" style="width:68px;margin-left:733px"></div><div class="ghost" style="width:68px;margin-left:16px"></div><div class="ghost" style="width:68px;margin-left:16px"></div>
</div>

<!-- track bar -->
<div class="timeline"><svg id="timeline" width="1370" height="26"></svg></div>

<!-- status bar -->
<div class="status d-flex">
  <div style="flex:none">
    <div class="mini-box mini-a">actionMan.exe</div>
    <div class="mini-box mini-b">MAXScript Mini</div>
  </div>
  <div class="st-sep"></div>
  <div style="width:690px;flex:none">
    <div style="margin-top:11px">1 Object Selected</div>
    <div style="margin-top:9px">Click and drag to select and move objects</div>
  </div>
  <div style="width:447px;flex:none">
    <div class="d-flex align-items-center" style="margin-top:9px;height:17px">
      <div class="st-ico" style="width:20px;margin-left:2px"><svg viewBox="0 0 20 20"><path d="M2 6V2h4M14 2h4v4M2 14v4h4M18 14v4h-4" fill="none" stroke="#ddd" stroke-width="1.4"/><rect x="6" y="6" width="8" height="8" fill="#3dbdbd"/></svg></div>
      <div class="st-ico" style="width:20px;margin-left:7px"><svg viewBox="0 0 20 20"><path d="M6 9V6a4 4 0 0 1 8 0v3" fill="none" stroke="#ddd" stroke-width="2"/><rect x="4" y="9" width="12" height="9" fill="#ddd"/><rect x="9" y="11" width="2" height="5" fill="#444"/></svg></div>
      <div class="st-ico" style="width:20px;margin-left:7px"><svg viewBox="0 0 20 20"><rect x="3" y="3" width="14" height="14" fill="none" stroke="#ddd" stroke-width="1.6"/><circle cx="10" cy="10" r="4" fill="#ddd"/><path d="M10 3v3M10 14v3M3 10h3M14 10h3" stroke="#ddd" stroke-width="2"/></svg></div>
      <span style="margin-left:5px">X:</span><div class="spn" style="width:68px;margin-left:4px">0,0m</div>
      <span style="margin-left:3px">Y:</span><div class="spn" style="width:68px;margin-left:4px">0,0m</div>
      <span style="margin-left:3px">Z:</span><div class="spn" style="width:68px;margin-left:4px">0,0m</div>
      <span style="margin-left:5px;padding-top:1px">Grid = 0,1m</span>
    </div>
    <div class="d-flex align-items-center" style="margin-top:6px;margin-left:308px;height:21px">
      <div style="width:1px;height:20px;background:#111;margin-right:1px"></div>
      <div style="width:21px;height:20px;background:#5b86bb;border-radius:3px 3px 0 0;display:flex;align-items:center;justify-content:center"><svg width="16" height="16" viewBox="0 0 16 16"><path d="M8 1l6 3v8l-6 3-6-3V4zM2 4l6 3 6-3M8 7v8" fill="none" stroke="#ddd" stroke-width="1.2"/></svg></div>
      <span style="margin-left:5px;padding-top:2px">Add Time Tag</span>
    </div>
  </div>
  <div style="width:120px;flex:none">
    <div style="margin-top:6px;height:22px">
      <svg width="118" height="22" viewBox="0 0 118 22">
        <path d="M2 5v12h2V5zM11 5L5 11l6 6zM17 5l-5 6 5 6z" fill="#ccc"/><path d="M23.5 3v16" stroke="#111"/>
        <path d="M35 5l-6 6 6 6zM37 5v12h2V5zM41 5v12h2V5z" fill="#ccc"/><path d="M52 3l14 8-14 9z" fill="#ddd"/><path d="M74 5v12h2V5zM78 5v12h2V5zM82 5l6 6-6 6z" fill="#ccc"/><path d="M95.5 3v16" stroke="#111"/>
        <path d="M101 5l6 6-6 6zM107 5l5 6-5 6zM113 5v12h2V5z" fill="#ccc"/>
      </svg>
    </div>
    <div class="d-flex align-items-center" style="margin-top:3px;height:17px">
      <svg width="16" height="12" viewBox="0 0 16 12" style="margin-left:2px;flex:none"><path d="M7 1L1 6l6 5zM9 1l6 5-6 5z" fill="#ddd"/></svg>
      <div class="spn" style="width:68px;margin-left:5px">0</div>
      <svg width="22" height="20" viewBox="0 0 22 20" style="margin-left:6px;flex:none"><circle cx="8" cy="8" r="6" fill="#ddd"/><path d="M8 4v4h3" stroke="#444" fill="none"/><circle cx="13" cy="14" r="3.4" fill="#444" stroke="#f0a020" stroke-width="2"/></svg>
    </div>
  </div>
</div>

<!-- Track View window -->
<div class="tv-win">
  <div class="tv-title d-flex align-items-center">
    <div class="app-icon">3</div><span style="margin-left:1px">Track View - Curve Editor</span>
    <svg class="tv-ctrl" style="right:106px" viewBox="0 0 16 16"><path d="M3 8.5h10" stroke="#888"/></svg>
    <svg class="tv-ctrl" style="right:61px" viewBox="0 0 16 16"><rect x="3.5" y="3.5" width="9" height="9" fill="none" stroke="#666"/></svg>
    <svg class="tv-ctrl" style="right:15px" viewBox="0 0 16 16"><path d="M3 3l10 10M13 3L3 13" stroke="#777"/></svg>
  </div>
  <div class="tv-menu"><span style="left:13px">Editor</span><span style="left:71px">Edit</span><span style="left:118px">View</span><span style="left:171px">Curves</span><span style="left:233px">Keys</span><span style="left:285px">Tangents</span><span style="left:362px">Show</span></div>
  <div class="tv-tools d-flex align-items-center">
    <div class="grip" style="margin-right:4px"></div>
    <div class="tbtn"><svg><use href="#t-filter"/></svg></div><div class="tbtn"><svg><use href="#t-lock"/></svg></div><div class="tbtn"><svg><use href="#t-pencil"/></svg></div><div class="tbtn"><svg><use href="#t-add"/></svg></div>
    <div class="tbtn on fly"><svg><use href="#t-move"/></svg></div><div class="tbtn"><svg><use href="#t-slide"/></svg></div><div class="tbtn"><svg><use href="#t-scale"/></svg></div><div class="tbtn"><svg><use href="#t-scalev"/></svg></div>
    <div class="tbtn"><svg><use href="#t-magnet"/></svg></div><div class="tbtn"><svg><use href="#t-snapf"/></svg></div><div class="tbtn"><svg><use href="#t-curvek"/></svg></div><div class="tbtn"><svg><use href="#t-dim1"/></svg></div><div class="tbtn"><svg><use href="#t-dim1"/></svg></div><div class="tbtn"><svg><use href="#t-dim1"/></svg></div><div class="tbtn"><svg><use href="#t-cursor"/></svg></div>
    <div class="tsep dot"></div>
    <div class="tbtn"><svg><use href="#t-dimkey"/></svg></div><div class="tbtn"><svg><use href="#t-dimud"/></svg></div>
    <div class="tsep dot"></div>
    <div class="tbtn"><svg><use href="#t-dimarc"/></svg></div><div class="tbtn"><svg><use href="#t-dimmir"/></svg></div><div class="tbtn"><svg><use href="#t-dimv"/></svg></div>
    <div class="tsep dot"></div>
    <div class="tbtn"><svg><use href="#t-dimh"/></svg></div><div class="tbtn"><svg><use href="#t-dimbars"/></svg></div><div class="tbtn"><svg><use href="#t-dimdown"/></svg></div><div class="tbtn"><svg><use href="#t-dimcut"/></svg></div><div class="tbtn"><svg><use href="#t-dimch"/></svg></div><div class="tbtn"><svg><use href="#t-dimbr"/></svg></div><div class="tbtn"><svg><use href="#t-dimst"/></svg></div><div class="tbtn"><svg><use href="#t-dimcy"/></svg></div>
    <div class="tsep dot"></div>
    <div class="tbtn fly"><svg><use href="#t-dima"/></svg></div><div class="tbtn fly"><svg><use href="#t-dimp"/></svg></div><div class="tbtn fly"><svg><use href="#t-dimc1"/></svg></div><div class="tbtn fly"><svg><use href="#t-dimc2"/></svg></div><div class="tbtn fly"><svg><use href="#t-dimc3"/></svg></div><div class="tbtn"><svg><use href="#t-dimc4"/></svg></div>
    <div class="tsep dot" style="width:6px"></div>
    <div class="tbtn on"><svg><use href="#t-eye"/></svg></div>
  </div>
  <div class="tv-mid d-flex">
    <div class="tv-tree">
      <svg class="position-absolute top-0 start-0" width="203" height="257" viewBox="83 289 203 257" fill="none" stroke="#ccc" stroke-dasharray="1 1">
        <path d="M89.5 300v12.5h19M97.5 313v15.5h18M137.5 329v175.5h13M137.5 344.5h19M153.5 345v143.5M153.5 360.5h18M153.5 424.5h18M153.5 488.5h18M170.5 361v47.5M170.5 376.5h11M170.5 392.5h11M170.5 408.5h11M170.5 425v47.5M170.5 440.5h11M170.5 456.5h11M170.5 472.5h11"/>
        <circle cx="125" cy="328.5" r="5" fill="#5b86bb" stroke="none"/>
        <path d="M182.5 371v10" stroke="#e03020" stroke-width="2" stroke-dasharray="none"/><path d="M182.5 387v10" stroke="#70c020" stroke-width="2" stroke-dasharray="none"/><path d="M182.5 403v10" stroke="#2040e0" stroke-width="2" stroke-dasharray="none"/>
        <path d="M182.5 435v10" stroke="#e03020" stroke-width="2" stroke-dasharray="none"/><path d="M182.5 451v10" stroke="#70c020" stroke-width="2" stroke-dasharray="none"/><path d="M182.5 467v10" stroke="#2040e0" stroke-width="2" stroke-dasharray="none"/>
        <rect x="149.5" y="500.5" width="6" height="7" stroke-dasharray="none" fill="#444"/><path d="M151 504h3M152.5 502v4" stroke-dasharray="none"/>
      </svg>
      <div class="tree-row" style="padding-left:11px">World</div>
      <div class="tree-row" style="padding-left:27px">Objects</div>
      <div class="tree-row"><span class="tree-box">Sphere001</span></div>
      <div class="tree-row" style="padding-left:75px">Transform</div>
      <div class="tree-row" style="padding-left:91px">Position</div>
      <div class="tree-row"><span class="tree-sel">X Position</span></div>
      <div class="tree-row" style="padding-left:102px">Y Position</div>
      <div class="tree-row" style="padding-left:102px">Z Position</div>
      <div class="tree-row" style="padding-left:91px">Rotation</div>
      <div class="tree-row" style="padding-left:102px">X Rotation</div>
      <div class="tree-row" style="padding-left:102px">Y Rotation</div>
      <div class="tree-row" style="padding-left:102px">Z Rotation</div>
      <div class="tree-row" style="padding-left:91px">Scale</div>
      <div class="tree-row" style="padding-left:75px">Object (Sphere)</div>
    </div>
    <div class="sbar-v">
      <div class="sbar-arrow"><svg width="10" height="6" viewBox="0 0 10 6"><path d="M1 5l4-4 4 4" fill="none" stroke="#444" stroke-width="1.6"/></svg></div>
      <div class="sbar-thumb" style="top:17px;height:17px"></div>
    </div>
    <div class="tv-sep"></div>
    <div class="tv-labels">
      <svg class="position-absolute" style="left:3px;top:4px" width="12" height="12" viewBox="0 0 12 12"><path d="M10 1v10L2 6z" fill="#eee" stroke="#111"/></svg>
      <span style="top:19px">100</span><span style="top:121px">0</span>
    </div>
    <div class="tv-graph"><svg id="curve" width="901" height="257" viewBox="340 289 901 257"></svg></div>
    <div class="sbar-v">
      <div class="sbar-arrow" style="padding-top:8px"><svg width="10" height="6" viewBox="0 0 10 6"><path d="M1 5l4-4 4 4" fill="none" stroke="#444" stroke-width="1.6"/></svg></div>
      <div class="sbar-thumb" style="top:126px;height:17px"></div>
    </div>
  </div>
  <div class="tv-hbar">
    <svg class="position-absolute" style="left:3px;top:3px" width="8" height="10" viewBox="0 0 8 10"><path d="M6 1L2 5l4 4" fill="none" stroke="#333" stroke-width="1.6"/></svg>
    <div class="position-absolute" style="left:17px;top:0;width:17px;height:16px;background:#cdcdcd"></div>
  </div>
  <div class="tv-bottom d-flex align-items-center">
    <div class="tbtn" style="width:22px"><svg style="width:22px;height:22px"><use href="#t-zoomtree"/></svg></div>
    <div class="gray-field" style="width:78px;margin-left:10px"></div>
    <div style="width:268px"></div>
    <div class="tbtn on" style="width:30px"><svg><use href="#f-win"/></svg></div>
    <div class="tbtn" style="margin-left:1px"><svg><use href="#f-film"/></svg></div><div class="tbtn"><svg><use href="#f-layer"/></svg></div><div class="tbtn"><svg><use href="#f-key"/></svg></div><div class="tbtn"><svg><use href="#f-eye"/></svg></div><div class="tbtn"><svg><use href="#f-lock"/></svg></div>
    <div class="grip" style="height:24px;margin:0 0 0 14px"></div>
    <div class="gray-field" style="width:70px;margin-left:2px"></div>
  </div>
</div>

<!-- Assign Float Controller -->
<div class="dlg" style="left:208px;top:433px;width:267px;height:405px">
  <div class="dlg-title d-flex align-items-center" style="color:#111">
    Assign Float Controller
    <span class="position-absolute" style="left:195px;top:6px;font-size:14px">?</span>
    <svg class="position-absolute" style="left:238px;top:8px" width="12" height="12" viewBox="0 0 12 12"><path d="M1 1l10 10M11 1L1 11" stroke="#222" stroke-width="1.1"/></svg>
  </div>
  <div class="float-list">
    <div class="list-group list-group-flush" style="--bs-list-group-bg:transparent;--bs-list-group-border-width:0;margin-top:-1px">
      <div class="list-group-item float-item">Alembic Float</div>
      <div class="list-group-item float-item">AudioFloat</div>
      <div class="list-group-item float-item">Bezier Float</div>
      <div class="list-group-item float-item">Biped SubAnim</div>
      <div class="list-group-item float-item">Boolean Controller</div>
      <div class="list-group-item float-item">Float Expression</div>
      <div class="list-group-item float-item">Float Limit</div>
      <div class="list-group-item float-item">Float List</div>
      <div class="list-group-item float-item">Float Motion Capture</div>
      <div class="list-group-item float-item">Float Reaction</div>
      <div class="list-group-item float-item">Float Script</div>
      <div class="list-group-item float-item">Linear Float</div>
      <div class="list-group-item float-item">LinkTimeControl</div>
      <div class="list-group-item float-item">Motion Clip SlaveFloat</div>
      <div class="list-group-item float-item">Noise Float</div>
      <div class="list-group-item float-item">On/Off</div>
      <div class="list-group-item float-item">Set Key Crtl</div>
      <div class="list-group-item float-item">SlaveFloat</div>
      <div class="list-group-item float-item">TCB Float</div>
      <div class="list-group-item float-item sel">&gt;Waveform Float</div>
      <div class="list-group-item float-item">tyRateOfChange</div>
    </div>
    <div class="float-sb">
      <svg class="position-absolute" style="left:4px;top:5px" width="10" height="6" viewBox="0 0 10 6"><path d="M1 5l4-4 4 4" fill="none" stroke="#bbb" stroke-width="1.6"/></svg>
      <svg class="position-absolute" style="left:4px;bottom:5px" width="10" height="6" viewBox="0 0 10 6"><path d="M1 1l4 4 4-4" fill="none" stroke="#bbb" stroke-width="1.6"/></svg>
    </div>
  </div>
  <div class="d-flex" style="margin:13px 0 0 7px"><span style="width:52px">Default:</span><span>Bezier Float</span></div>
  <div class="d-flex" style="margin:16px 0 0 9px">
    <button class="dlg-btn dim" style="width:73px">Make Default</button>
    <button class="dlg-btn" style="width:73px;margin-left:23px">OK</button>
    <button class="dlg-btn" style="width:73px;margin-left:8px">Cancel</button>
  </div>
</div>

<!-- Waveform Controller -->
<div class="dlg" style="left:748px;top:507px;width:594px;height:359px">
  <div class="dlg-title d-flex align-items-center" style="color:#888;letter-spacing:-.1px">
    Waveform Controller : Sphere001\X Position
    <svg class="position-absolute" style="right:9px;top:8px" width="12" height="12" viewBox="0 0 12 12"><path d="M1 1l10 10M11 1L1 11" stroke="#777"/></svg>
  </div>
  <div class="d-flex" style="padding:9px 0 0 12px">
    <div style="width:194px;flex:none">
      <div class="wf-list"><div class="wf-sel">Waveform</div></div>
      <div style="margin-top:13px">Characteristic Graph:</div>
      <div class="d-flex" style="margin-top:3px;height:74px">
        <svg id="wfGraph" width="208" height="74" style="flex:none"></svg>
        <div class="d-flex flex-column justify-content-between" style="margin-left:10px;margin-top:-2px;height:81px;white-space:nowrap"><span>100,0</span><span>-100,0</span></div>
      </div>
      <div class="d-flex align-items-center" style="margin-top:11px;padding-left:4px;white-space:nowrap">
        <div class="rb on"></div><span style="margin-left:6px">This Wave</span>
        <div class="rb" style="margin-left:14px"></div><span style="margin-left:6px">This Output</span>
        <div class="rb" style="margin-left:13px"></div><span style="margin-left:6px">Final Output</span>
      </div>
    </div>
    <div style="width:73px;flex:none;margin-left:1px">
      <button class="dlg-btn w-100">Add</button>
      <button class="dlg-btn w-100" style="margin-top:8px">Insert</button>
      <button class="dlg-btn w-100 dim" style="margin-top:7px">Remove</button>
      <button class="dlg-btn w-100 dim" style="margin-top:8px">Move Up</button>
      <button class="dlg-btn w-100 dim" style="margin-top:9px">Move Down</button>
      <div class="d-flex align-items-center" style="margin:8px 0 0 9px"><div class="chk" style="margin-right:2px"></div>Disable</div>
    </div>
    <div style="width:280px;flex:none;margin-left:23px;margin-top:5px">
      <div class="grp" style="height:273px">
        <div class="grp-legend">Waveform</div>
        <div class="d-flex align-items-center" style="margin-top:14px;padding-left:18px"><span style="width:36px;padding-top:1px">Name:</span><div class="wf-name">Waveform</div></div>
        <div class="d-flex" style="margin-top:11px;padding-left:29px">
          <div class="shape-btn on"><svg width="18" height="18" viewBox="0 0 18 18"><path d="M1 9.5h16" stroke="#2f2"/><path d="M2 9.5c2-9 5-9 7 0s5 9 7 0" fill="none" stroke="#111"/></svg></div>
          <div class="shape-btn" style="margin-left:9px"><svg width="18" height="18" viewBox="0 0 18 18"><path d="M1 9.5h16" stroke="#2f2"/><path d="M4.5 9.5v-6h5v12h5v-6" fill="none" stroke="#111"/></svg></div>
          <div class="shape-btn" style="margin-left:10px"><svg width="18" height="18" viewBox="0 0 18 18"><path d="M1 10.5h16" stroke="#2f2"/><path d="M3 16L9 3l6 13" fill="none" stroke="#111"/></svg></div>
          <div class="shape-btn" style="margin-left:11px"><svg width="18" height="18" viewBox="0 0 18 18"><path d="M1 10.5h16" stroke="#2f2"/><path d="M2 16L15 3v13" fill="none" stroke="#111"/></svg></div>
          <div class="shape-btn" style="margin-left:10px"><svg width="18" height="18" viewBox="0 0 18 18"><path d="M1 9.5h16" stroke="#2f2"/><path d="M4.5 16V8c0-6 9-6 9 0v8" fill="none" stroke="#111"/></svg></div>
          <div style="margin-left:15px;margin-top:-2px">
            <div class="d-flex align-items-center" style="height:16px"><div class="chk" style="margin-right:2px;margin-top:-2px"></div>Inverted</div>
            <div class="d-flex align-items-center" style="height:16px"><div class="chk" style="margin-right:2px;margin-top:-2px"></div>Flipped</div>
          </div>
        </div>
        <div class="d-flex" style="margin-top:5px">
          <div style="flex:none;width:136px">
            <div class="param-row d-flex align-items-center"><label>Period:</label><div class="spn">50,0</div></div>
            <div class="param-row d-flex align-items-center"><label>Duty Cycle:</label><div class="spn off">50,0</div></div>
            <div class="param-row d-flex align-items-center"><label>Amplitude:</label><div class="spn">100,0</div></div>
            <div class="param-row d-flex align-items-center"><label>Phase:</label><div class="spn">0,0</div></div>
          </div>
          <div class="grp" style="width:107px;height:77px;margin:4px 0 0 16px">
            <div class="grp-legend">Effect</div>
            <div class="d-flex align-items-center" style="height:16.5px;padding-left:12px;margin-top:9px"><div class="rb on"></div><span style="margin-left:6px">Add</span></div>
            <div class="d-flex align-items-center" style="height:16.5px;padding-left:12px"><div class="rb"></div><span style="margin-left:6px">Multiply</span></div>
            <div class="d-flex align-items-center" style="height:16.5px;padding-left:12px"><div class="rb"></div><span style="margin-left:6px">Clamp Above</span></div>
            <div class="d-flex align-items-center" style="height:16.5px;padding-left:12px"><div class="rb"></div><span style="margin-left:6px">Clamp Below</span></div>
          </div>
        </div>
        <div class="grp" style="width:197px;height:92px;margin:8px 0 0 41px">
          <div class="grp-legend">Vertical Bias</div>
          <div class="d-flex align-items-center" style="height:19px;padding-left:40px;margin-top:10px"><div class="rb on"></div><span style="margin-left:6px">Centered</span></div>
          <div class="d-flex align-items-center" style="height:19px;padding-left:40px"><div class="rb"></div><span style="margin-left:6px">Auto &gt; 0</span></div>
          <div class="d-flex align-items-center" style="height:19px;padding-left:40px"><div class="rb"></div><span style="margin-left:6px">Auto &lt; 0</span></div>
          <div class="d-flex align-items-center" style="height:19px;padding-left:40px"><div class="rb"></div><span style="margin-left:6px">Manual:</span><div class="spn" style="margin-left:10px;height:15px;line-height:15px">0,0</div></div>
        </div>
      </div>
      <button class="dlg-btn" style="width:119px;margin:10px 0 0 160px">About Waveform...</button>
    </div>
  </div>
</div>

<script>
  // track view curve: 8px per frame, 10.16px per 10 units
  var g = '<rect x="340" y="289" width="901" height="240" fill="#3b3b3b"/>';
  g += '<rect x="340" y="289" width="38" height="240" fill="#353535"/><rect x="1179" y="289" width="62" height="240" fill="#353535"/>';
  for (var i = -12; i <= 11; i++) {
    var ly = 417.5 - i * 10.16;
    g += '<path d="M340 ' + ly + 'H1241" stroke="' + (i == 10 ? '#2a2a2a' : '#2f2f2f') + '"/>';
  }
  for (var f = -10; f <= 110; f += 10) {
    var lx = 378 + f * 8 - 0.5;
    g += '<path d="M' + lx + ' 293V529" stroke="#2e2e2e"/>';
  }
  g += '<path d="M340.5 293V529" stroke="#111"/>';
  g += '<path d="M340 289H1241V293H340z" fill="#444"/>';
  g += '<rect x="371" y="293" width="2" height="236" fill="#b8a01c"/><rect x="377" y="293" width="2" height="236" fill="#b8a01c"/>';
  g += '<rect x="340" y="416" width="901" height="3" fill="#0a0a0a"/>';
  var d = 'M378 417';
  for (f = 0; f <= 100; f += 0.5) {
    d += 'L' + (378 + f * 8) + ' ' + (417 - 101.6 * Math.sin(f * Math.PI / 25)).toFixed(1);
  }
  g += '<path d="' + d + '" fill="none" stroke="#35c4cc"/>';
  g += '<path d="M341 417H378M1179 417H1240" stroke="#35c4cc" stroke-dasharray="3 2"/>';
  // ruler
  g += '<rect x="340" y="529" width="901" height="17" fill="#3a3a3a"/><path d="M340 529.5H1241" stroke="#000" stroke-width="1.5"/><path d="M340 545H1241" stroke="#000" stroke-width="1.5"/>';
  for (f = -4; f <= 108; f++) {
    lx = 378 + f * 8 - 0.5;
    var big = f % 10 == 0;
    g += '<path d="M' + lx + (big ? ' 530V545' : ' 541V544') + '" stroke="' + (big ? '#bbb' : '#888') + '"/>';
    if (big) g += '<text x="' + (lx + 2) + '" y="541" fill="#ccc" font-size="12">' + f + '</text>';
  }
  document.getElementById('curve').innerHTML = g;

  // characteristic graph of the waveform dialog
  var w = '<rect width="208" height="74" fill="#fff"/><path d="M1 0H208M.5 0V74" stroke="#000" stroke-width="2"/>';
  w += '<path d="M2 37H208" stroke="#000" stroke-dasharray="4 3"/>';
  var wd = 'M1 37';
  for (var x = 1; x <= 208; x++) {
    wd += 'L' + x + ' ' + (37 - 32.5 * Math.sin((x - 1) * Math.PI / 52)).toFixed(1);
  }
  w += '<path d="' + wd + '" fill="none" stroke="#000"/>';
  document.getElementById('wfGraph').innerHTML = w;

  // wireframe sphere in the top view, centre 74,75
  var s = '', cx = 74, cy = 75, r = 58.5;
  for (var a = 0; a < 32; a++) {
    var t = a * Math.PI / 16;
    s += '<path d="M' + (cx + 5 * Math.cos(t)) + ' ' + (cy + 5 * Math.sin(t)) + 'L' + (cx + r * Math.cos(t)) + ' ' + (cy + r * Math.sin(t)) + '" stroke="#fff" stroke-width="1.2" opacity=".85"/>';
  }
  for (var k = 1; k <= 7; k++) {
    s += '<circle cx="' + cx + '" cy="' + cy + '" r="' + (r * Math.cos((8 - k) * Math.PI / 16 * 0.93)).toFixed(1) + '" fill="none" stroke="#fff" stroke-width="1.3" opacity=".85"/>';
  }
  s += '<circle cx="' + cx + '" cy="' + cy + '" r="' + r + '" fill="none" stroke="#fff" stroke-width="2"/>';
  s += '<circle cx="' + cx + '" cy="' + cy + '" r="9" fill="#fff"/>';
  s += '<rect x="' + cx + '" y="' + (cy - 21) + '" width="21" height="21" fill="#e8e888" opacity=".35" stroke="none"/>';
  s += '<path d="M' + cx + ' ' + (cy - 21) + 'h21v21" fill="none" stroke="#e8e820" stroke-width="1.4"/>';
  s += '<path d="M' + cx + ' ' + cy + 'h46" stroke="#e8e820" stroke-width="1.4"/>';
  s += '<path d="M' + cx + ' ' + cy + 'v-50" stroke="#8a8a18" stroke-width="2"/>';
  s += '<path d="M' + (cx - 3) + ' ' + (cy - 46) + 'h6l-3 -13z" fill="#0a8a0a"/>';
  s += '<path d="M' + (cx + 45) + ' ' + (cy - 3) + 'v6l15 -3z" fill="#d00000"/>';
  s += '<text x="' + (cx + 62) + '" y="' + (cy - 1) + '" fill="#e8e820" font-size="12">x</text><text x="' + (cx - 3) + '" y="' + (cy - 62) + '" fill="#e8e820" font-size="12">y</text>';
  document.getElementById('sphere').innerHTML = s;

  // track bar along the bottom, 16px per frame
  var tl = '<path d="M8 0.5H1370" stroke="#151515"/><rect x="60" y="1" width="1310" height="25" fill="#2b2b2b"/>';
  tl += '<path d="M19 6h22M19 25h22" stroke="#aaa"/><rect x="18" y="20" width="23" height="4" fill="#dcc3c3"/><path d="M24 16c2-10 4-10 6-3s4 8 6-3" fill="none" stroke="#35c4cc" stroke-width="1.3" transform="translate(0 -2)"/>';
  for (f = 1; f <= 82; f++) {
    lx = 64 + f * 15.97;
    tl += '<path d="M' + (Math.round(lx) - 0.5) + ' 1V12" stroke="#777"/>';
    if (f % 5 == 0) {
      tl += '<text x="' + lx + '" y="24" text-anchor="middle" fill="#aaa" font-size="12">' + f + '</text>';
    }
  }
  tl += '<rect x="60" y="2" width="8" height="24" fill="#85851e"/><text x="64" y="24" text-anchor="middle" fill="#d0d060" font-size="12">0</text>';
  document.getElementById('timeline').innerHTML = tl;
</script>
<script src="https://cdn.jsdelivr.net/npm/bootstrap@5.3.0/dist/js/bootstrap.bundle.min.js"></script>
</body>
</html>
